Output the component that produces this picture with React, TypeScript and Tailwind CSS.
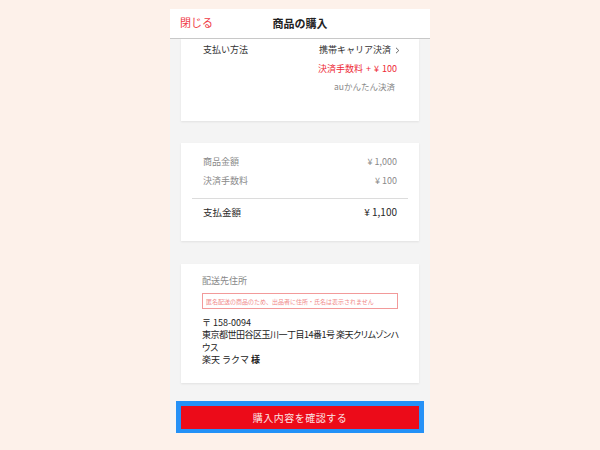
export default function App() {
  return (
    <div
      className="w-[600px] h-[450px] bg-[#fdf1ea] flex justify-center pt-[9px]"
      style={{ fontFamily: '"Noto Sans CJK JP", "Noto Sans", sans-serif' }}
    >
      <div className="w-[260px] h-[424px] bg-[#f4f4f4] flex flex-col overflow-hidden">
        {/* header */}
        <div className="h-[30px] shrink-0 bg-white border-b border-[#c8c8c8] relative flex items-center justify-center">
          <span className="absolute left-[10px] top-[3px] text-[11px] leading-[20px] text-[#ef3b46]">閉じる</span>
          <span className="text-[11px] font-bold text-[#222] leading-[20px] -mt-[2px]">商品の購入</span>
        </div>

        {/* payment method card (scrolled) */}
        <div className="mx-[11px] bg-white shadow-[0_1px_2px_rgba(0,0,0,0.08)] pt-[4px] pb-[28px] px-[22px]">
          <div className="flex justify-between items-center h-[14px] text-[9px] text-[#333]">
            <span>支払い方法</span>
            <span className="flex items-center gap-[4px] -mr-[3px]">
              携帯キャリア決済
              <svg width="5" height="7" viewBox="0 0 5 7" fill="none">
                <path d="M1 0.8 L3.8 3.5 L1 6.2" stroke="#555" strokeWidth="0.9" />
              </svg>
            </span>
          </div>
          <div className="mt-[5px] h-[14px] leading-[14px] text-right text-[9px] text-[#ee2a36] [word-spacing:1px]">決済手数料 + ¥ 100</div>
          <div className="mt-[3px] h-[14px] leading-[14px] text-right text-[8.5px] text-[#888] pr-[2px]">auかんたん決済</div>
        </div>

        {/* price card */}
        <div className="mx-[11px] mt-[22px] bg-white shadow-[0_1px_2px_rgba(0,0,0,0.08)] pt-[12px] pb-[22px]">
          <div className="px-[22px] flex justify-between h-[14px] leading-[14px] text-[9px] text-[#8a8a8a]">
            <span>商品金額</span>
            <span>¥ 1,000</span>
          </div>
          <div className="px-[22px] mt-[5px] flex justify-between h-[14px] leading-[14px] text-[9px] text-[#8a8a8a]">
            <span>決済手数料</span>
            <span>¥ 100</span>
          </div>
          <div className="mx-[11px] mt-[10px] h-px bg-[#dcdcdc]" />
          <div className="px-[22px] mt-[6px] flex justify-between h-[14px] leading-[14px] text-[#2a2a2a]">
            <span className="text-[9.5px]">支払金額</span>
            <span className="text-[10px]">¥ 1,100</span>
          </div>
        </div>

        {/* address card */}
        <div className="mx-[11px] mt-[23px] bg-white shadow-[0_1px_2px_rgba(0,0,0,0.08)] pt-[10px] pb-[17px] px-[21px]">
          <div className="h-[14px] leading-[14px] text-[9px] text-[#888]">配送先住所</div>
          <div className="mt-[5px] h-[16px] border border-[#f29a9a] flex items-center px-[3px] text-[6px] text-[#f08a8a] whitespace-nowrap overflow-hidden">
            匿名配送の商品のため、出品者に住所・氏名は表示されません
          </div>
          <div className="mt-[8px] text-[9px] leading-[12.3px] text-[#222]">
            <div>〒 158-0094</div>
            <div className="whitespace-nowrap [font-feature-settings:'palt'] tracking-[-0.5px]">東京都世田谷区玉川一丁目14番1号 楽天クリムゾンハ</div>
            <div className="[font-feature-settings:'palt']">ウス</div>
            <div>
              楽天 ラクマ <span className="font-bold">様</span>
            </div>
          </div>
        </div>

        {/* confirm button */}
        <div className="mx-[6px] mt-[18px] border-[5px] border-[#2391f7]">
          <button className="w-full h-[23px] bg-[#ec0b19] text-[10px] text-[#fbe3e4] tracking-[0.5px] flex items-center justify-center">
            購入内容を確認する
          </button>
        </div>
      </div>
    </div>
  );
}
